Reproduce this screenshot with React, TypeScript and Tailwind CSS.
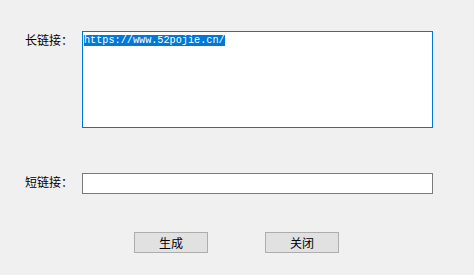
import React from "react";

export default function App() {
  const cjk = { fontFamily: '"Noto Sans CJK SC", "Microsoft YaHei", sans-serif' };
  return (
    <div
      className="w-[474px] h-[275px] bg-[#f0f0f0] overflow-hidden flex flex-col text-black"
      style={cjk}
    >
      <div className="flex mt-[31px]">
        <div className="w-[82px] pl-[25px] pt-[1px] text-[12px] leading-[16px]">长链接：</div>
        <div
          className="w-[351px] h-[97px] border border-[#0078d7] bg-white pl-[1px] pt-[3px] text-[10.2px] leading-[11px]"
          style={{ fontFamily: '"Liberation Mono", monospace' }}
        >
          <span className="bg-[#0078d7] text-white inline-block leading-[11px] align-top">
            https://www.52pojie.cn/
          </span>
        </div>
      </div>
      <div className="flex mt-[45px]">
        <div className="w-[82px] pl-[25px] pt-[1px] text-[12px] leading-[16px]">短链接：</div>
        <div className="w-[351px] h-[21px] border border-[#7a7a7a] bg-white" />
      </div>
      <div className="flex mt-[38px] pl-[134px] gap-[57px]">
        <button className="w-[74px] h-[21px] border border-[#adadad] bg-[#e1e1e1] text-[12px] leading-[16px] flex items-center justify-center">
          生成
        </button>
        <button className="w-[74px] h-[21px] border border-[#adadad] bg-[#e1e1e1] text-[12px] leading-[16px] flex items-center justify-center">
          关闭
        </button>
      </div>
    </div>
  );
}
